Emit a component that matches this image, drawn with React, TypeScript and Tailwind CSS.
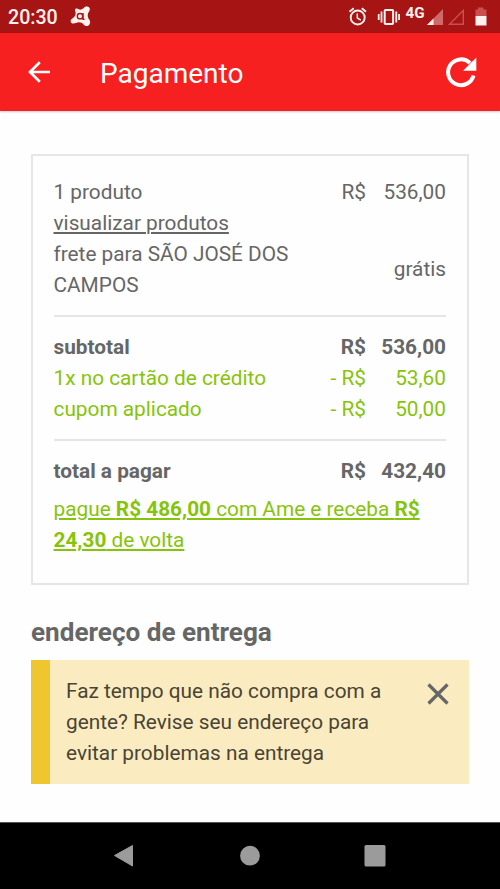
import React from 'react';

interface PriceRowProps {
  label: string;
  currency: string;
  value: string;
  className?: string;
}

const PriceRow: React.FC<PriceRowProps> = ({ label, currency, value, className }) => (
  <div className={`flex justify-between ${className ?? ''}`}>
    <span>{label}</span>
    <span className="flex">
      <span>{currency}</span>
      <span className="w-20 text-right">{value}</span>
    </span>
  </div>
);

const StatusBar: React.FC = () => (
  <div className="h-[33px] bg-[#a61414] flex items-center justify-between pl-2 pr-[13px] text-[#fff1ee]">
    <div className="flex items-center">
      <span className="text-[19.6px] leading-[33px] font-medium w-[62px] pt-px">20:30</span>
      <svg width="21" height="21" viewBox="0 0 21 21" fill="currentColor">
        <path d="M5 4C5 2.500 6.500 2.200 7.500 2.800C9.500 4 11.500 4 13.500 2.200C14.500 .8 16 .3 17.600.6C19.800 1.100 20.500 3.500 19.200 5.200C17.500 7.500 17.200 9.800 18.600 12.700C20.500 14.600 20.600 17 19.300 18.700C17.900 20.500 15.200 20.500 13.800 18.700C11.500 16.200 9 15.700 6 17C4 17.800 1.500 17.800.8 16C.2 14.200 1.200 13 2.700 12.200C5 10.800 6 8.500 5.600 6.200C5.400 5.500 5 4.800 5 4z" />
        <circle cx="10" cy="10.200" r="2.700" fill="none" stroke="#a61414" strokeWidth="1.400" />
        <path d="M13 7v6.200h1.500" fill="none" stroke="#a61414" strokeWidth="1.400" />
      </svg>
    </div>
    <svg width="140" height="33" viewBox="347 0 140 33" fill="none" stroke="currentColor">
      {/* alarm */}
      <circle cx="357.700" cy="17.500" r="7" strokeWidth="1.900" />
      <path d="M349.500 11.700l4.200-3.500M366 11.700l-4.200-3.500" strokeWidth="1.900" />
      <path d="M357.300 13.500v4.500l3.500 2.200" strokeWidth="1.500" />
      {/* vibrate */}
      <rect x="384.700" y="9.900" width="8.400" height="14.200" rx="0.800" strokeWidth="2" />
      <path d="M381.500 11.500v11M396.300 11.500v11M378.700 14v6M399.100 14v6" strokeWidth="1.800" />
      <text x="405.600" y="18" fontSize="15.200" fontWeight="700" fill="currentColor" stroke="none">4G</text>
      {/* signal */}
      <path d="M427 25L443 9v16z" fill="#d06a68" stroke="none" />
      <path d="M427 25l6.500-6.500V25z" fill="currentColor" stroke="none" />
      <path d="M449.500 24.300L463.300 10.500v13.800z" stroke="#c8504e" strokeWidth="1.400" />
      {/* battery */}
      <path d="M478 7.500h5.500v2h3V16h-11V9.500H478z" fill="#c8504e" stroke="none" />
      <path d="M475.500 16h11v9.500h-11z" fill="currentColor" stroke="none" />
    </svg>
  </div>
);

const AppBar: React.FC = () => (
  <header className="h-[78px] bg-[#f72020] flex items-center pl-7 pr-[23px] text-white shadow-[0_1px_2px_rgba(0,0,0,0.2)]">
    <svg width="22" height="22" viewBox="0 0 22 22" fill="none" stroke="currentColor" strokeWidth="2.700">
      <path d="M22 11H2.500M11.800 1.300L2 11l9.800 9.700" />
    </svg>
    <h1 className="flex-1 pl-[50px] pt-[3px] text-[28px] leading-8">Pagamento</h1>
    <svg width="32" height="32" viewBox="0 0 32 32" fill="none" stroke="currentColor">
      <path d="M28.500 19.500A12.900 12.900 0 1 1 25 7" strokeWidth="4" />
      <path d="M31.300 1.500v13.200H18z" fill="currentColor" stroke="none" />
    </svg>
  </header>
);

const OrderSummary: React.FC = () => (
  <section className="h-[431px] border-2 border-[#e6e6e6] pl-[20.500px] pr-[21px] pt-[21px] text-[20.800px] leading-[31px] text-[#666]">
    <PriceRow label="1 produto" currency="R$" value="536,00" />
    <a className="block underline underline-offset-[1.500px] decoration-[1.500px]">visualizar produtos</a>
    <div className="flex items-center justify-between">
      <span className="w-[260px]">frete para SÃO JOSÉ DOS CAMPOS</span>
      <span className="pb-px">grátis</span>
    </div>

    <div className="mt-3.5 mb-[15px] h-0.5 bg-[#e6e6e6]" />
    <PriceRow label="subtotal" currency="R$" value="536,00" className="font-bold" />
    <PriceRow label="1x no cartão de crédito" currency="- R$" value="53,60" className="text-[#86c40b]" />
    <PriceRow label="cupom aplicado" currency="- R$" value="50,00" className="text-[#86c40b]" />

    <div className="mt-3.5 mb-[15px] h-0.5 bg-[#e6e6e6]" />
    <PriceRow label="total a pagar" currency="R$" value="432,40" className="font-bold" />
    <a className="mt-[7px] block text-[#86c40b] underline underline-offset-[1.500px] decoration-[1.500px]">
      pague <b>R$ 486,00</b> com Ame e receba <b>R$ 24,30</b> de volta
    </a>
  </section>
);

const AddressNotice: React.FC = () => (
  <div className="h-[124px] flex bg-[#faecc0] border-l-[19px] border-[#f0c630] pl-4 pr-5 pt-4">
    <p className="flex-1 text-[20.800px] leading-[31px] text-[#4a4435]">
      Faz tempo que não compra com a<br />
      gente? Revise seu endereço para<br />
      evitar problemas na entrega
    </p>
    <svg className="mt-[7px]" width="22" height="22" viewBox="0 0 22 22" fill="none" stroke="#666" strokeWidth="3.200">
      <path d="M1.500 1.500l19 19M20.500 1.500l-19 19" />
    </svg>
  </div>
);

const NavigationBar: React.FC = () => (
  <nav className="h-[67px] bg-black border-t border-[#555]">
    <svg width="500" height="66" viewBox="0 823 500 66" fill="#9b9b9b">
      <path d="M114.500 855.500L132.500 845.500v20.500z" stroke="#9b9b9b" strokeLinejoin="round" />
      <circle cx="250" cy="855.700" r="9.900" />
      <rect x="364.500" y="845" width="21" height="21.500" rx="1.500" />
    </svg>
  </nav>
);

const App: React.FC = () => {
  return (
    <div className="w-[500px] h-[889px] flex flex-col overflow-hidden bg-[#fefefe] font-[Roboto,sans-serif]">
      <StatusBar />
      <AppBar />
      <main className="flex-1 px-[31px] pt-[43px]">
        <OrderSummary />
        <h2 className="mt-[31px] mb-3 text-[26.100px] leading-8 font-bold text-[#666]">endereço de entrega</h2>
        <AddressNotice />
      </main>
      <NavigationBar />
    </div>
  );
};

export default App;
